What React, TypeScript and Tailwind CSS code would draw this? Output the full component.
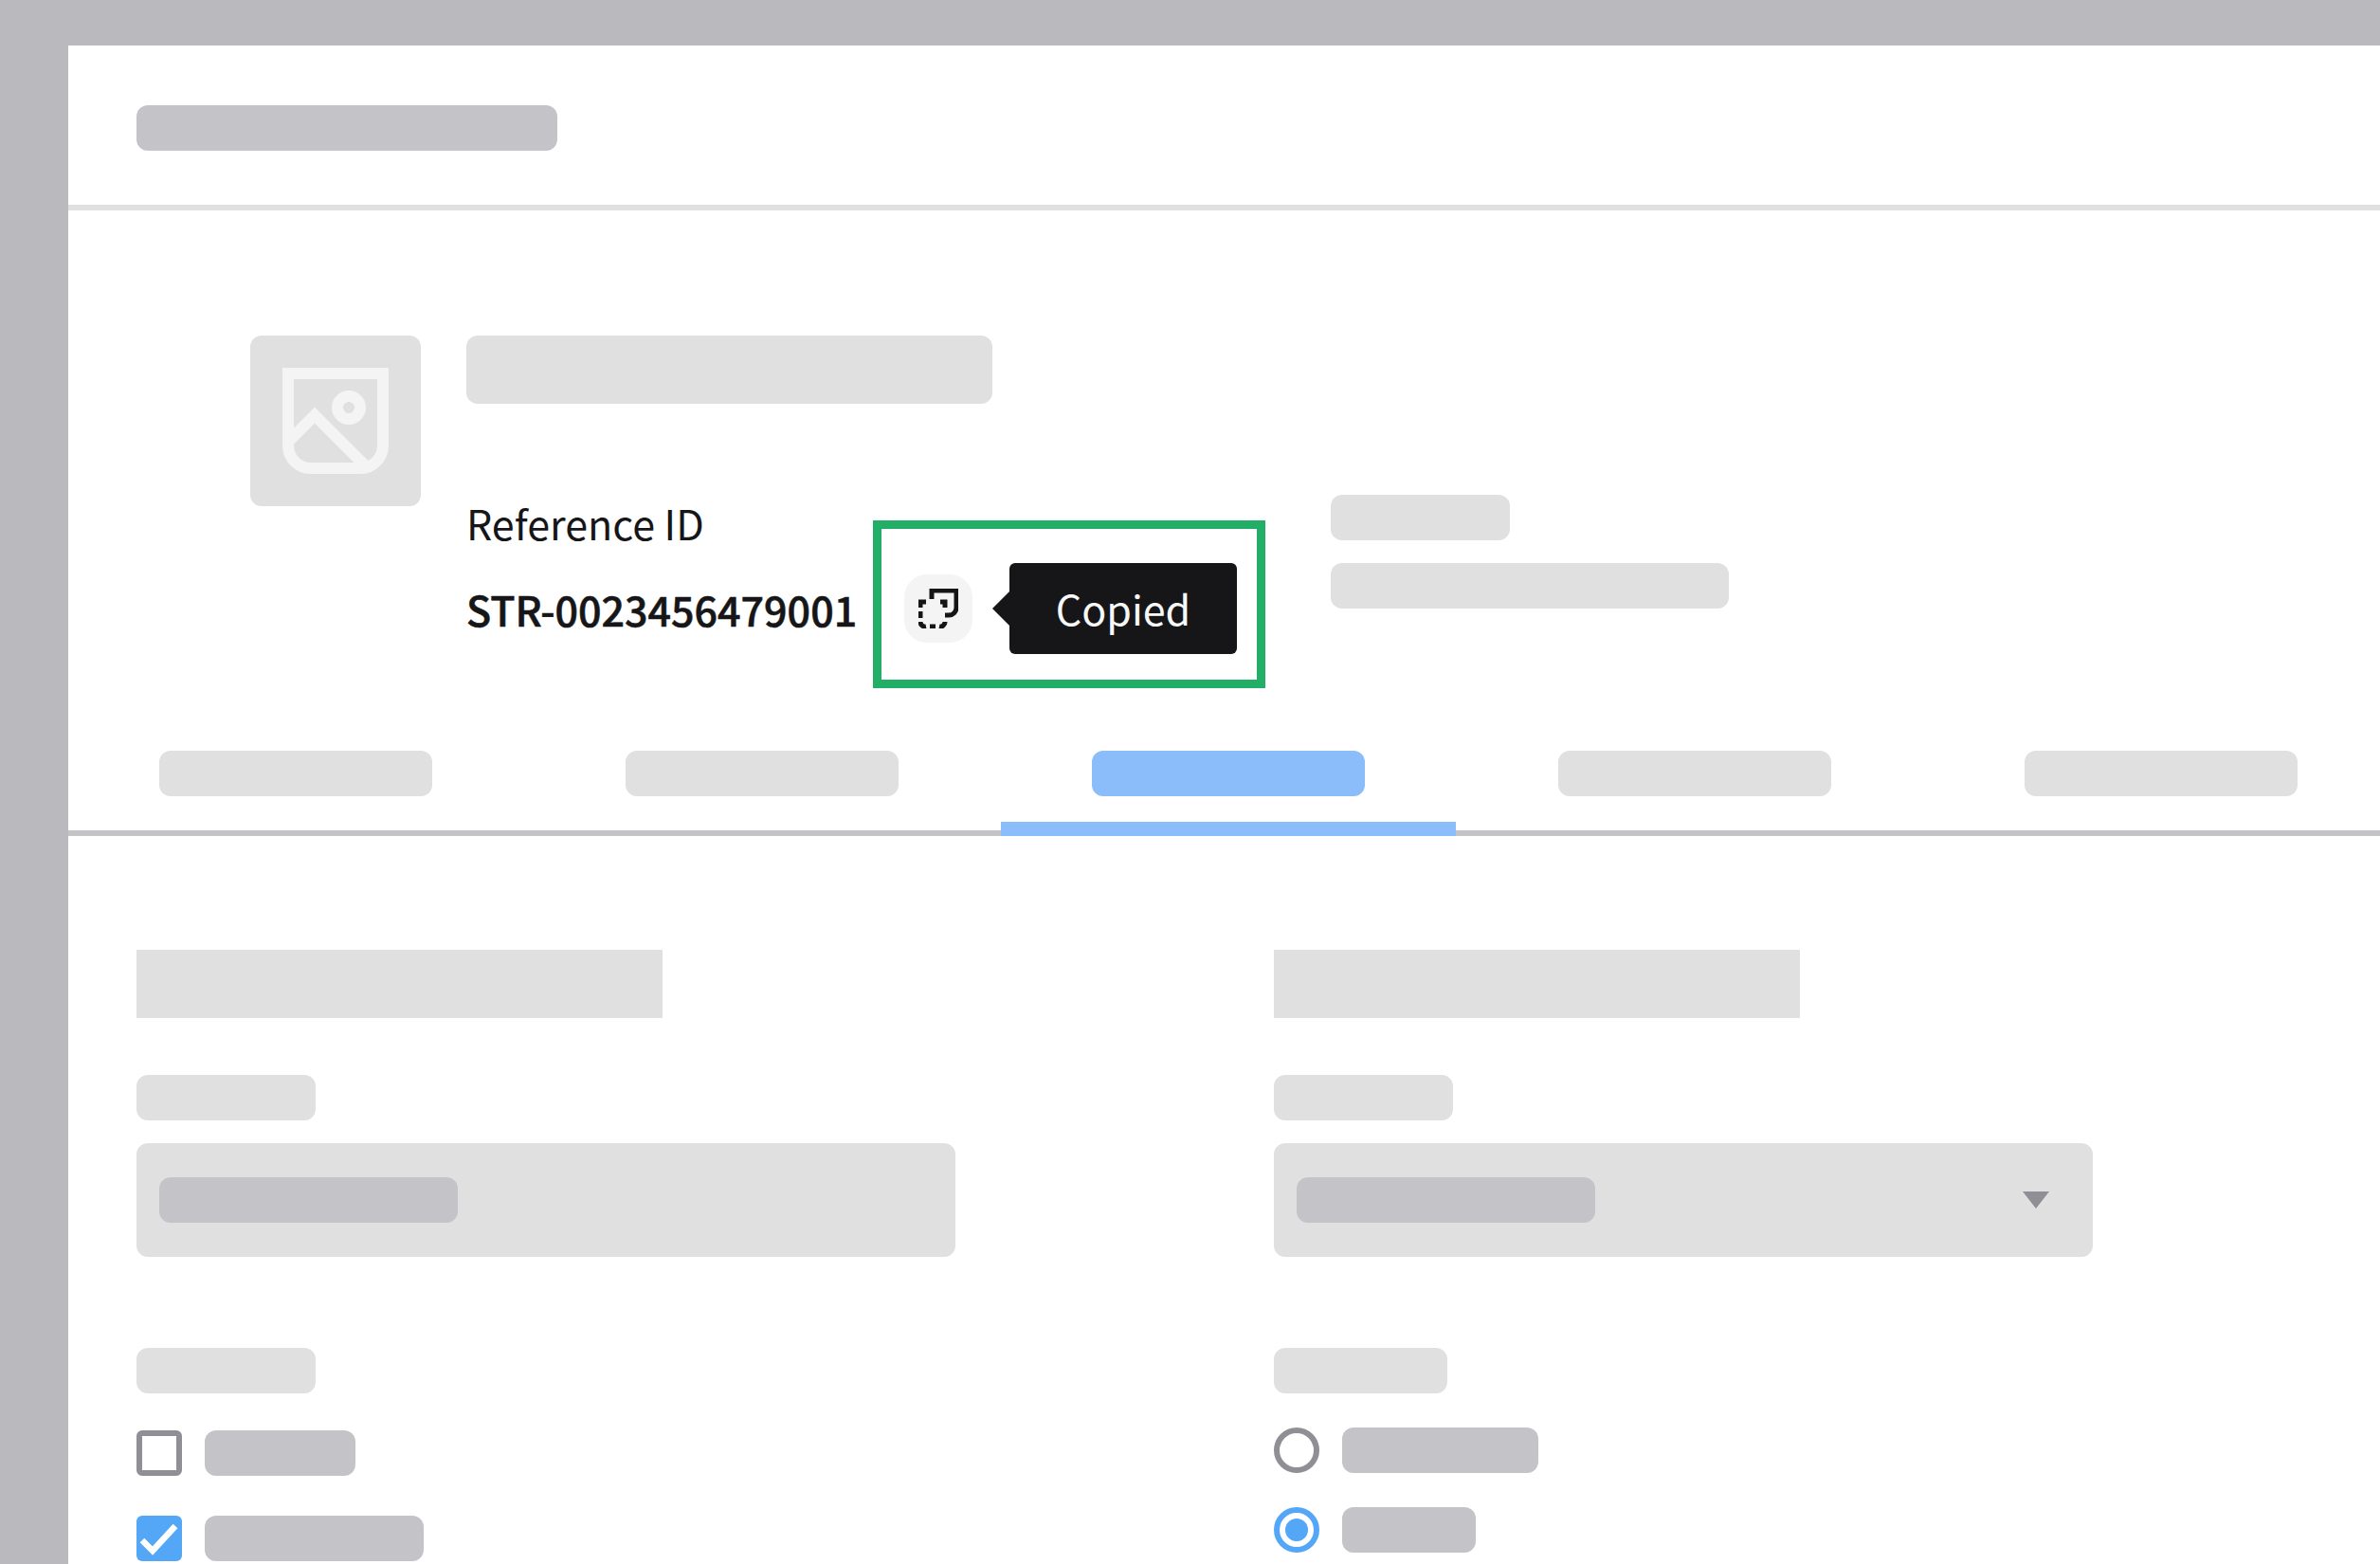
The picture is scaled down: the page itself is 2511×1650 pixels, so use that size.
const Bar = ({ className }: { className: string }) => <div className={`rounded-[12px] ${className}`} />;

const ImageIcon = () => (
  <svg width="112" height="112" viewBox="0 0 112 112" fill="none" stroke="#f4f4f4" strokeWidth="12">
    <path d="M6 6H106V82A24 24 0 0 1 82 106H30A24 24 0 0 1 6 82Z" />
    <path d="M6 78L34 50L86 102" />
    <circle cx="70" cy="42" r="12" />
  </svg>
);

const CopyIcon = () => (
  <svg width="42" height="42" viewBox="0 0 42 42" fill="none" stroke="#161618" strokeWidth="5">
    <path d="M14 11V2H40V20A8 8 0 0 1 32 28H28" />
    <path d="M2 20V14H8" />
    <path d="M2 24V31" />
    <path d="M2 35A5 5 0 0 0 8 40" />
    <path d="M12 40H18" />
    <path d="M22 40A5 5 0 0 0 28 35" />
    <path d="M23 14H28V20" />
  </svg>
);

const tabs = [false, false, true, false, false];

export default function App() {
  return (
    <div className="w-[2511px] h-[1650px] overflow-hidden bg-[#bab9be] pl-[72px] pt-[48px] font-['Noto_Sans_CJK_JP','Noto_Sans',sans-serif] text-[#161618]">
      <div className="bg-white h-[1602px] flex flex-col">
        <header className="h-[174px] shrink-0 border-b-[6px] border-[#e0e0e0] pt-[63px] pl-[72px]">
          <Bar className="w-[444px] h-[48px] bg-[#c4c3c8]" />
        </header>

        <section className="h-[570px] shrink-0 pt-[132px] pl-[192px] flex items-start gap-[48px]">
          <div className="w-[180px] h-[180px] rounded-[12px] bg-[#e0e0e0] flex items-center justify-center">
            <ImageIcon />
          </div>
          <div className="flex flex-col">
            <Bar className="w-[555px] h-[72px] bg-[#e0e0e0]" />
            <div className="flex items-start mt-[96px]">
              <div className="w-[429px] -mt-[3px]">
                <div className="text-[43px] leading-[64px] font-normal">Reference ID</div>
                <div className="text-[43px] leading-[64px] font-medium [-webkit-text-stroke:0.6px_#161618] mt-[27px]">STR-0023456479001</div>
              </div>
              <div className="mt-[27px] w-[414px] h-[177px] border-[9px] border-[#22ae66] flex items-center pl-[24px] pt-[9px]">
                <button className="w-[72px] h-[72px] rounded-[24px] bg-[#f4f4f4] flex items-center justify-center">
                  <CopyIcon />
                </button>
                <div className="relative ml-[39px] w-[240px] h-[96px] rounded-[6px] bg-[#161618] flex items-center justify-center pb-[2px] text-[#f8f8f8] text-[43px] leading-none font-normal">
                  <svg className="absolute left-[-18px] top-[30px]" width="18" height="36" viewBox="0 0 18 36">
                    <path d="M18 0V36L0 18Z" fill="#161618" />
                  </svg>
                  Copied
                </div>
              </div>
              <div className="ml-[69px] flex flex-col gap-[24px]">
                <Bar className="w-[189px] h-[48px] bg-[#e0e0e0]" />
                <Bar className="w-[420px] h-[48px] bg-[#e0e0e0]" />
              </div>
            </div>
          </div>
        </section>

        <nav className="h-[90px] shrink-0 border-b-[6px] border-[#c4c3c8] flex items-start gap-[12px]">
          {tabs.map((active, i) => (
            <div
              key={i}
              className={`w-[480px] h-[90px] shrink-0 border-b-[15px] flex justify-center ${active ? "border-[#8abdf9]" : "border-transparent"}`}
            >
              <Bar className={`w-[288px] h-[48px] ${active ? "bg-[#8abdf9]" : "bg-[#e0e0e0]"}`} />
            </div>
          ))}
        </nav>

        <section className="pt-[120px] pl-[72px] flex">
          <div className="w-[1200px] shrink-0 flex flex-col items-start">
            <div className="w-[555px] h-[72px] bg-[#e0e0e0]" />
            <Bar className="w-[189px] h-[48px] bg-[#e0e0e0] mt-[60px]" />
            <div className="w-[864px] h-[120px] rounded-[12px] bg-[#e0e0e0] mt-[24px] pl-[24px] flex items-center">
              <Bar className="w-[315px] h-[48px] bg-[#c4c3c8]" />
            </div>
            <Bar className="w-[189px] h-[48px] bg-[#e0e0e0] mt-[96px]" />
            <div className="flex items-center gap-[24px] mt-[39px]">
              <div className="w-[48px] h-[48px] rounded-[6px] border-[6px] border-[#8f8f95] bg-white" />
              <Bar className="w-[159px] h-[48px] bg-[#c4c3c8]" />
            </div>
            <div className="flex items-center gap-[24px] mt-[42px]">
              <div className="w-[48px] h-[48px] rounded-[6px] bg-[#54a6f7] flex items-center justify-center">
                <svg width="48" height="48" viewBox="0 0 48 48" fill="none" stroke="#fff" strokeWidth="6.5">
                  <path d="M6 26L17 37L41 11" />
                </svg>
              </div>
              <Bar className="w-[231px] h-[48px] bg-[#c4c3c8]" />
            </div>
          </div>

          <div className="w-[1200px] shrink-0 flex flex-col items-start">
            <div className="w-[555px] h-[72px] bg-[#e0e0e0]" />
            <Bar className="w-[189px] h-[48px] bg-[#e0e0e0] mt-[60px]" />
            <div className="w-[864px] h-[120px] rounded-[12px] bg-[#e0e0e0] mt-[24px] pl-[24px] pr-[46px] flex items-center justify-between">
              <Bar className="w-[315px] h-[48px] bg-[#c4c3c8]" />
              <svg width="28" height="18" viewBox="0 0 28 18">
                <path d="M0 0H28L14 18Z" fill="#8f8f95" />
              </svg>
            </div>
            <Bar className="w-[183px] h-[48px] bg-[#e0e0e0] mt-[96px]" />
            <div className="flex items-center gap-[24px] mt-[36px]">
              <div className="w-[48px] h-[48px] rounded-full border-[6px] border-[#8f8f95] bg-white" />
              <Bar className="w-[207px] h-[48px] bg-[#c4c3c8]" />
            </div>
            <div className="flex items-center gap-[24px] mt-[36px]">
              <div className="w-[48px] h-[48px] rounded-full border-[6px] border-[#54a6f7] bg-white flex items-center justify-center">
                <div className="w-[24px] h-[24px] rounded-full bg-[#54a6f7]" />
              </div>
              <Bar className="w-[141px] h-[48px] bg-[#c4c3c8]" />
            </div>
          </div>
        </section>
      </div>
    </div>
  );
}
